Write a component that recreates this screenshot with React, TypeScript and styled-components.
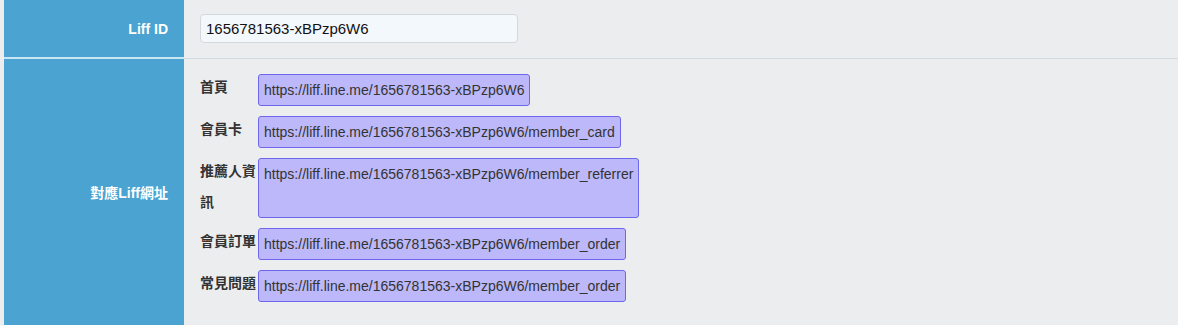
import styled, { createGlobalStyle } from "styled-components";

const GlobalStyle = createGlobalStyle`
  html, body {
    margin: 0;
    padding: 0;
    background: #ecedef;
  }
  body {
    font-family: "Liberation Sans", Arial, "Noto Sans CJK TC", sans-serif;
    color: #333;
  }
`;

const Page = styled.div`
  padding-left: 4px;
  height: 325px;
  overflow: hidden;
`;

const Table = styled.div`
  display: grid;
  grid-template-columns: 180px 1fr;
`;

const HeadCell = styled.div<{ $last?: boolean }>`
  background: #4ba3d1;
  color: #fff;
  font-weight: bold;
  font-size: 14px;
  display: flex;
  align-items: center;
  justify-content: flex-end;
  padding-right: 16px;
  border-bottom: ${(p) => (p.$last ? "none" : "2px solid #c9e6f4")};
`;

const BodyCell = styled.div<{ $last?: boolean }>`
  padding: ${(p) => (p.$last ? "15px 16px 23px" : "14px 16px 15px")};
  border-bottom: ${(p) => (p.$last ? "none" : "1px solid #d3dbe2")};
`;

const TextInput = styled.input`
  box-sizing: border-box;
  width: 318px;
  height: 29px;
  padding: 0 5px;
  border: 1px solid #d4d8dc;
  border-radius: 4px;
  background: #f3f8fc;
  font-family: "Liberation Sans", Arial, sans-serif;
  font-size: 15px;
  color: #111;
  outline: none;
  display: block;
`;

const LinkList = styled.div`
  display: flex;
  flex-direction: column;
  gap: 10px;
`;

const LinkRow = styled.div`
  display: flex;
  align-items: flex-start;
`;

const LinkLabel = styled.div`
  width: 58px;
  flex: none;
  font-family: "Liberation Sans", Arial, "Noto Sans CJK TC", sans-serif;
  font-size: 14px;
  font-weight: bold;
  color: #333;
  line-height: 31px;
  margin-top: -2px;
  word-break: break-all;
`;

const LinkBox = styled.div<{ $tall?: boolean }>`
  box-sizing: border-box;
  min-height: ${(p) => (p.$tall ? "60px" : "32px")};
  padding: 6px 5px;
  border: 1px solid #6f66ee;
  border-radius: 3px;
  background: #bcb8f9;
  font-size: 14px;
  line-height: 18px;
  color: #333;
  white-space: nowrap;
`;

const base = "https://liff.line.me/1656781563-xBPzp6W6";

const links = [
  { label: "首頁", url: base },
  { label: "會員卡", url: `${base}/member_card` },
  { label: "推薦人資訊", url: `${base}/member_referrer`, tall: true },
  { label: "會員訂單", url: `${base}/member_order` },
  { label: "常見問題", url: `${base}/member_order` },
];

export default function App() {
  return (
    <>
      <GlobalStyle />
      <Page>
        <Table>
          <HeadCell>Liff ID</HeadCell>
          <BodyCell>
            <TextInput defaultValue="1656781563-xBPzp6W6" readOnly />
          </BodyCell>
          <HeadCell $last>對應Liff網址</HeadCell>
          <BodyCell $last>
            <LinkList>
              {links.map((l) => (
                <LinkRow key={l.label}>
                  <LinkLabel>{l.label}</LinkLabel>
                  <LinkBox $tall={l.tall}>{l.url}</LinkBox>
                </LinkRow>
              ))}
            </LinkList>
          </BodyCell>
        </Table>
      </Page>
    </>
  );
}
